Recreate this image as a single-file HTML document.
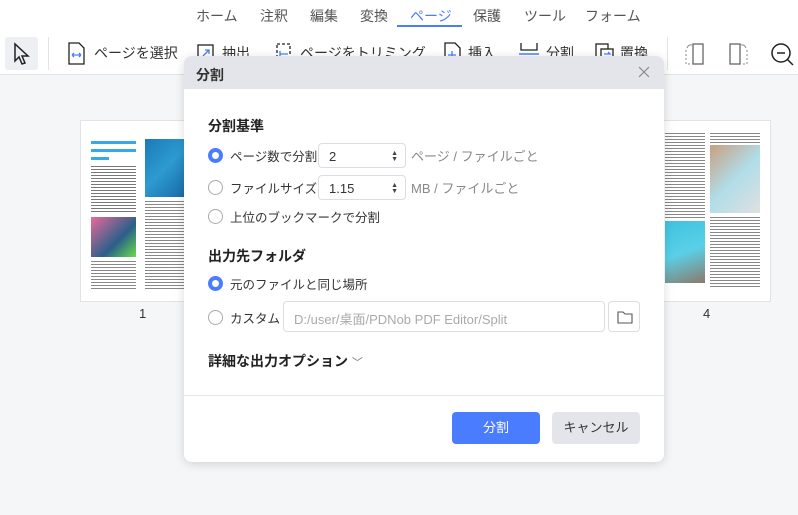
<!DOCTYPE html>
<html><head><meta charset="utf-8"><style>
*{margin:0;padding:0;box-sizing:border-box}
body{width:798px;height:515px;overflow:hidden;background:#f5f6f8;font-family:"Liberation Sans","Noto Sans CJK JP",sans-serif;color:#333;position:relative}
.top{position:absolute;left:0;top:0;width:798px;height:75px;background:#fff;border-bottom:1px solid #e3e3e6}
.tab{position:absolute;top:6px;font-size:14px;color:#555}
.tb{position:absolute;top:43px;font-size:14px;color:#333;white-space:nowrap}
.abs{position:absolute}
.page{position:absolute;background:#fff;border:1px solid #e2e3e6}
.dlg{position:absolute;left:184px;top:56px;width:480px;height:406px;background:#fff;border-radius:8px;box-shadow:0 2px 10px rgba(0,0,0,.15);overflow:hidden}
.hd{height:33px;background:#e4e5ea;font-size:14px;font-weight:bold;padding:9px 0 0 12px}
.sec{position:absolute;left:24px;font-size:14px;font-weight:bold;color:#222}
.rad{position:absolute;left:24px;width:15px;height:15px;border-radius:50%;border:1px solid #aaa;background:#fff}
.rad.on{border:4px solid #4a7cff}
.lbl{position:absolute;left:46px;font-size:12.5px;color:#333;white-space:nowrap}
.inp{position:absolute;border:1px solid #dcdde2;border-radius:4px;background:#fff;font-size:13px;color:#333;padding:5px 0 0 10px}
.spin{position:absolute;right:7px;top:7px;font-size:7px;line-height:6px;color:#444}
.gray{color:#888}
</style></head><body>
<div class="top">
<span class="tab" style="left:196px">ホーム</span>
<span class="tab" style="left:260px">注釈</span>
<span class="tab" style="left:310px">編集</span>
<span class="tab" style="left:360px">変換</span>
<span class="tab" style="left:410px;color:#4a7cff">ページ</span>
<div class="abs" style="left:397px;top:25px;width:65px;height:2px;background:#4a7cff"></div>
<span class="tab" style="left:473px">保護</span>
<span class="tab" style="left:524px">ツール</span>
<span class="tab" style="left:585px">フォーム</span>
<div class="abs" style="left:5px;top:37px;width:33px;height:33px;background:#eeeff2;border-radius:3px"></div>
<svg class="abs" style="left:12px;top:42px" width="20" height="24"><path d="M3 2 L3 19 L7 15 L10 22 L13 21 L10 14 L16 14 Z" fill="none" stroke="#222" stroke-width="1.5"/></svg>
<div class="abs" style="left:48px;top:37px;width:1px;height:33px;background:#e3e3e6"></div>
<svg class="abs" style="left:66px;top:42px" width="20" height="24"><path d="M3 1 H13 L18 6 V22 H3 Z" fill="none" stroke="#222" stroke-width="1.3"/><path d="M6 13 H15 M6 13 l2-2 M6 13 l2 2 M15 13 l-2-2 M15 13 l-2 2" stroke="#4a7cff" stroke-width="1.3" fill="none"/></svg>
<span class="tb" style="left:94px">ページを選択</span>
<svg class="abs" style="left:196px;top:42px" width="20" height="24"><rect x="2" y="3" width="15" height="18" fill="none" stroke="#222" stroke-width="1.3"/><path d="M7 14 L13 8 M9 8 H13 V12" stroke="#4a7cff" stroke-width="1.3" fill="none"/></svg>
<span class="tb" style="left:222px">抽出</span>
<svg class="abs" style="left:274px;top:42px" width="20" height="24"><path d="M3 2 H16 V21 H3 Z" fill="none" stroke="#222" stroke-width="1.3" stroke-dasharray="3 2"/><path d="M6 12 H14 M6 9 V15" stroke="#4a7cff" stroke-width="1.3"/></svg>
<span class="tb" style="left:300px">ページをトリミング</span>
<svg class="abs" style="left:442px;top:42px" width="20" height="24"><path d="M3 1 H13 L18 6 V22 H3 Z" fill="none" stroke="#222" stroke-width="1.3"/><path d="M10 9 V17 M6 13 H14" stroke="#4a7cff" stroke-width="1.3"/></svg>
<span class="tb" style="left:468px">挿入</span>
<svg class="abs" style="left:518px;top:42px" width="22" height="24"><path d="M3 1 V8 H19 V1 M3 23 V16 H19 V23" fill="none" stroke="#222" stroke-width="1.3"/><path d="M1 12 H21" stroke="#4a7cff" stroke-width="1.5"/></svg>
<span class="tb" style="left:546px">分割</span>
<svg class="abs" style="left:594px;top:42px" width="22" height="24"><rect x="2" y="2" width="12" height="15" fill="none" stroke="#222" stroke-width="1.3"/><rect x="7" y="7" width="12" height="15" fill="#fff" stroke="#222" stroke-width="1.3"/><path d="M10 12 H16 l-2 -2" stroke="#4a7cff" stroke-width="1.3" fill="none"/></svg>
<span class="tb" style="left:620px">置換</span>
<div class="abs" style="left:667px;top:37px;width:1px;height:33px;background:#e3e3e6"></div>
<svg class="abs" style="left:684px;top:42px" width="22" height="24"><rect x="9" y="2" width="10" height="20" fill="none" stroke="#666" stroke-width="1.3"/><path d="M2 8 V22 H9" fill="none" stroke="#888" stroke-dasharray="2 2"/><path d="M3 6 A4 4 0 0 1 8 3" stroke="#888" fill="none"/></svg>
<svg class="abs" style="left:727px;top:42px" width="22" height="24"><rect x="3" y="2" width="10" height="20" fill="none" stroke="#666" stroke-width="1.3"/><path d="M20 8 V22 H13" fill="none" stroke="#888" stroke-dasharray="2 2"/><path d="M14 3 A4 4 0 0 1 19 6" stroke="#888" fill="none"/></svg>
<svg class="abs" style="left:770px;top:42px" width="28" height="26"><circle cx="11" cy="11" r="9" fill="none" stroke="#222" stroke-width="1.5"/><path d="M7 11 H15 M17 17 L23 23" stroke="#222" stroke-width="1.5"/></svg>
</div>

<div class="page" style="left:80px;top:120px;width:110px;height:182px">
<div class="abs" style="left:10px;top:20px;width:45px;height:3px;background:#38a8e8"></div>
<div class="abs" style="left:10px;top:28px;width:45px;height:3px;background:#38a8e8"></div>
<div class="abs" style="left:10px;top:36px;width:18px;height:3px;background:#38a8e8"></div>
<div class="abs" style="left:10px;top:45px;width:45px;height:48px;background:repeating-linear-gradient(#777 0 1px,transparent 1px 3px)"></div>
<div class="abs" style="left:10px;top:96px;width:45px;height:40px;background:linear-gradient(135deg,#e86a9a,#2a5f8a 60%,#6adc4a)"></div>
<div class="abs" style="left:10px;top:140px;width:45px;height:30px;background:repeating-linear-gradient(#888 0 1px,transparent 1px 3px)"></div>
<div class="abs" style="left:64px;top:18px;width:40px;height:58px;background:linear-gradient(135deg,#1a7ab8,#2d9ad0 50%,#1a6ba8)"></div>
<div class="abs" style="left:64px;top:80px;width:40px;height:90px;background:repeating-linear-gradient(#888 0 1px,transparent 1px 3px)"></div>
</div>
<div class="abs" style="left:139px;top:306px;font-size:13px;color:#333">1</div>
<div class="page" style="left:640px;top:120px;width:131px;height:182px">
<div class="abs" style="left:24px;top:12px;width:40px;height:85px;background:repeating-linear-gradient(#888 0 1px,transparent 1px 3px)"></div>
<div class="abs" style="left:24px;top:100px;width:40px;height:62px;background:linear-gradient(160deg,#3fc2e0,#5ad0e8 50%,#8a7a6a)"></div>
<div class="abs" style="left:69px;top:12px;width:50px;height:10px;background:repeating-linear-gradient(#888 0 1px,transparent 1px 3px)"></div>
<div class="abs" style="left:69px;top:24px;width:50px;height:68px;background:linear-gradient(135deg,#c9a080,#b0dde8 50%,#e0e0e0)"></div>
<div class="abs" style="left:69px;top:96px;width:50px;height:70px;background:repeating-linear-gradient(#888 0 1px,transparent 1px 3px)"></div>
</div>
<div class="abs" style="left:703px;top:306px;font-size:13px;color:#333">4</div>

<div class="dlg">
<div class="hd">分割</div>
<svg class="abs" style="left:454px;top:10px" width="12" height="12"><path d="M1 1 L11 11 M11 1 L1 11" stroke="#888" stroke-width="1.2"/></svg>
<div class="sec" style="top:60px">分割基準</div>
<div class="rad on" style="top:92px"></div><div class="lbl" style="top:90px">ページ数で分割</div>
<div class="inp" style="left:134px;top:87px;width:88px;height:25px">2<div class="spin">▲<br>▼</div></div>
<div class="lbl gray" style="left:227px;top:90px;font-size:13px">ページ / ファイルごと</div>
<div class="rad" style="top:124px"></div><div class="lbl" style="top:122px">ファイルサイズ</div>
<div class="inp" style="left:134px;top:119px;width:88px;height:25px">1.15<div class="spin">▲<br>▼</div></div>
<div class="lbl gray" style="left:227px;top:122px;font-size:13px">MB / ファイルごと</div>
<div class="rad" style="top:153px"></div><div class="lbl" style="top:151px">上位のブックマークで分割</div>
<div class="sec" style="top:190px">出力先フォルダ</div>
<div class="rad on" style="top:220px"></div><div class="lbl" style="top:218px">元のファイルと同じ場所</div>
<div class="rad" style="top:254px"></div><div class="lbl" style="top:252px">カスタム</div>
<div class="inp" style="left:99px;top:245px;width:322px;height:31px;color:#aaa;padding-top:7px">D:/user/桌面/PDNob PDF Editor/Split</div>
<div class="inp" style="left:424px;top:245px;width:32px;height:31px;padding:0"><svg style="position:absolute;left:8px;top:8px" width="16" height="14"><path d="M1 2 H6 L8 4 H15 V13 H1 Z" fill="none" stroke="#555" stroke-width="1.1"/></svg></div>
<div class="sec" style="top:295px">詳細な出力オプション <span style="font-weight:normal;color:#777;font-size:11px">﹀</span></div>
<div class="abs" style="left:0;top:339px;width:480px;height:1px;background:#e5e5e8"></div>
<div class="abs" style="left:268px;top:356px;width:88px;height:32px;background:#4a7cff;border-radius:4px;color:#fff;font-size:13px;text-align:center;line-height:32px">分割</div>
<div class="abs" style="left:368px;top:356px;width:88px;height:32px;background:#e4e5ea;border-radius:4px;color:#333;font-size:13px;text-align:center;line-height:32px">キャンセル</div>
</div>
</body></html>
